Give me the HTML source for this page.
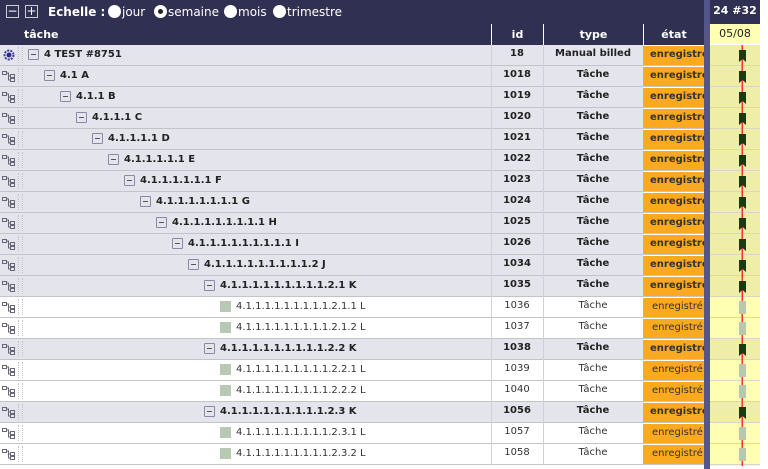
<!DOCTYPE html><html><head><meta charset="utf-8"><style>
body{margin:0;width:768px;height:469px;background:#fff;font-family:"DejaVu Sans","Liberation Sans",sans-serif;font-size:10px;position:relative;overflow:hidden;color:#222}
.a{position:absolute}
.top{left:0;top:0;width:760px;height:24px;background:#2f3052}
.hd{top:24px;height:21px;background:#2f3052;color:#fff;font-weight:bold;font-size:11px;line-height:21px;text-align:center;border-left:1px solid #fff;box-sizing:border-box}
.btn{top:5px;width:13px;height:13px;border:1px solid #ccc;box-sizing:border-box;color:#fff;font-size:12px;line-height:10px;text-align:center}
.rd{top:5px;width:13px;height:13px;border-radius:50%;background:#fff}
.tt{top:5px;color:#fff;font-size:12px;font-weight:bold}
.row{left:0;width:704px;height:20px;border-bottom:1px solid #c4c4c8}
.b{background:#e4e4ec;font-weight:bold}
.n{background:#fff;color:#333}
.c{position:absolute;top:0;height:20px;line-height:18px;text-align:center}
.et{left:643px;width:61px;background:#fba91e;color:#333;border-top:1px solid #fff;box-sizing:border-box;overflow:hidden;white-space:nowrap;text-align:left;padding-left:9px}
.b .et{padding-left:7px}
.mb{position:absolute;top:4px;width:11px;height:11px;border:1px solid #8a8aa8;box-sizing:border-box;background:#e4e4ec;border-radius:1px}
.mb:after{content:"";position:absolute;left:2px;top:4px;width:5px;height:1px;background:#555}
.sq{position:absolute;top:4px;width:11px;height:11px;background:#b7c9b3}
.lb{position:absolute;top:0;line-height:19px;white-space:nowrap}
.ic{position:absolute;left:2px;top:4px;width:14px;height:12px}
.dots{position:absolute;left:18px;top:2px;width:3px;height:16px;border-left:1px dotted #c4c4c4;border-right:1px dotted #c4c4c4}
</style></head><body>
<div class="a top"></div>
<div class="a btn" style="left:6px">−</div><div class="a btn" style="left:25px">+</div>
<div class="a tt" style="left:48px">Echelle :</div>
<div class="a rd" style="left:108px"></div><div class="a tt" style="left:122px;font-weight:normal">jour</div>
<div class="a rd" style="left:154px"></div><div class="a" style="left:158px;top:9px;width:5px;height:5px;border-radius:50%;background:#222"></div><div class="a tt" style="left:168px;font-weight:normal">semaine</div>
<div class="a rd" style="left:224px"></div><div class="a tt" style="left:238px;font-weight:normal">mois</div>
<div class="a rd" style="left:273px"></div><div class="a tt" style="left:287px;font-weight:normal">trimestre</div>
<div class="a hd" style="left:0;width:491px;border:0;text-align:left;padding-left:24px">tâche</div>
<div class="a hd" style="left:491px;width:52px">id</div>
<div class="a hd" style="left:543px;width:100px">type</div>
<div class="a hd" style="left:643px;width:61px">état</div>
<div class="a" style="left:704px;top:0;width:6px;height:469px;background:#54558a"></div>
<div class="a" style="left:710px;top:4px;width:50px;color:#fff;font-weight:bold;font-size:11px;text-align:center">24 #32</div>
<div class="a" style="left:710px;top:24px;width:50px;height:20px;background:#ffffb4;text-align:center;line-height:20px;font-size:11px">05/08</div>

<div class="a row b" style="top:45px"><svg class="ic" viewBox="0 0 14 12"><circle cx="7" cy="6" r="4.5" fill="none" stroke="#3a3a9a" stroke-dasharray="2 1.2" stroke-width="2"/><circle cx="7" cy="6" r="2.5" fill="#2a2a8a"/></svg><div class="dots"></div><div class="mb" style="left:28px"></div><div class="lb" style="left:44px">4 TEST #8751</div><div class="c" style="left:491px;width:52px">18</div><div class="c" style="left:543px;width:100px">Manual billed</div><div class="c et">enregistré</div></div>
<div class="a row b" style="top:66px"><svg class="ic" viewBox="0 0 14 12"><path d="M0.5 1.5h4v3h-4zM8.5 4.5h4v3h-4zM8.5 8.5h4v3h-4zM4.5 3h2v7h2M6.5 6h2" fill="none" stroke="#667" stroke-width="1"/></svg><div class="dots"></div><div class="mb" style="left:44px"></div><div class="lb" style="left:60px">4.1 A</div><div class="c" style="left:491px;width:52px">1018</div><div class="c" style="left:543px;width:100px">Tâche</div><div class="c et">enregistré</div></div>
<div class="a row b" style="top:87px"><svg class="ic" viewBox="0 0 14 12"><path d="M0.5 1.5h4v3h-4zM8.5 4.5h4v3h-4zM8.5 8.5h4v3h-4zM4.5 3h2v7h2M6.5 6h2" fill="none" stroke="#667" stroke-width="1"/></svg><div class="dots"></div><div class="mb" style="left:60px"></div><div class="lb" style="left:76px">4.1.1 B</div><div class="c" style="left:491px;width:52px">1019</div><div class="c" style="left:543px;width:100px">Tâche</div><div class="c et">enregistré</div></div>
<div class="a row b" style="top:108px"><svg class="ic" viewBox="0 0 14 12"><path d="M0.5 1.5h4v3h-4zM8.5 4.5h4v3h-4zM8.5 8.5h4v3h-4zM4.5 3h2v7h2M6.5 6h2" fill="none" stroke="#667" stroke-width="1"/></svg><div class="dots"></div><div class="mb" style="left:76px"></div><div class="lb" style="left:92px">4.1.1.1 C</div><div class="c" style="left:491px;width:52px">1020</div><div class="c" style="left:543px;width:100px">Tâche</div><div class="c et">enregistré</div></div>
<div class="a row b" style="top:129px"><svg class="ic" viewBox="0 0 14 12"><path d="M0.5 1.5h4v3h-4zM8.5 4.5h4v3h-4zM8.5 8.5h4v3h-4zM4.5 3h2v7h2M6.5 6h2" fill="none" stroke="#667" stroke-width="1"/></svg><div class="dots"></div><div class="mb" style="left:92px"></div><div class="lb" style="left:108px">4.1.1.1.1 D</div><div class="c" style="left:491px;width:52px">1021</div><div class="c" style="left:543px;width:100px">Tâche</div><div class="c et">enregistré</div></div>
<div class="a row b" style="top:150px"><svg class="ic" viewBox="0 0 14 12"><path d="M0.5 1.5h4v3h-4zM8.5 4.5h4v3h-4zM8.5 8.5h4v3h-4zM4.5 3h2v7h2M6.5 6h2" fill="none" stroke="#667" stroke-width="1"/></svg><div class="dots"></div><div class="mb" style="left:108px"></div><div class="lb" style="left:124px">4.1.1.1.1.1 E</div><div class="c" style="left:491px;width:52px">1022</div><div class="c" style="left:543px;width:100px">Tâche</div><div class="c et">enregistré</div></div>
<div class="a row b" style="top:171px"><svg class="ic" viewBox="0 0 14 12"><path d="M0.5 1.5h4v3h-4zM8.5 4.5h4v3h-4zM8.5 8.5h4v3h-4zM4.5 3h2v7h2M6.5 6h2" fill="none" stroke="#667" stroke-width="1"/></svg><div class="dots"></div><div class="mb" style="left:124px"></div><div class="lb" style="left:140px">4.1.1.1.1.1.1 F</div><div class="c" style="left:491px;width:52px">1023</div><div class="c" style="left:543px;width:100px">Tâche</div><div class="c et">enregistré</div></div>
<div class="a row b" style="top:192px"><svg class="ic" viewBox="0 0 14 12"><path d="M0.5 1.5h4v3h-4zM8.5 4.5h4v3h-4zM8.5 8.5h4v3h-4zM4.5 3h2v7h2M6.5 6h2" fill="none" stroke="#667" stroke-width="1"/></svg><div class="dots"></div><div class="mb" style="left:140px"></div><div class="lb" style="left:156px">4.1.1.1.1.1.1.1 G</div><div class="c" style="left:491px;width:52px">1024</div><div class="c" style="left:543px;width:100px">Tâche</div><div class="c et">enregistré</div></div>
<div class="a row b" style="top:213px"><svg class="ic" viewBox="0 0 14 12"><path d="M0.5 1.5h4v3h-4zM8.5 4.5h4v3h-4zM8.5 8.5h4v3h-4zM4.5 3h2v7h2M6.5 6h2" fill="none" stroke="#667" stroke-width="1"/></svg><div class="dots"></div><div class="mb" style="left:156px"></div><div class="lb" style="left:172px">4.1.1.1.1.1.1.1.1 H</div><div class="c" style="left:491px;width:52px">1025</div><div class="c" style="left:543px;width:100px">Tâche</div><div class="c et">enregistré</div></div>
<div class="a row b" style="top:234px"><svg class="ic" viewBox="0 0 14 12"><path d="M0.5 1.5h4v3h-4zM8.5 4.5h4v3h-4zM8.5 8.5h4v3h-4zM4.5 3h2v7h2M6.5 6h2" fill="none" stroke="#667" stroke-width="1"/></svg><div class="dots"></div><div class="mb" style="left:172px"></div><div class="lb" style="left:188px">4.1.1.1.1.1.1.1.1.1 I</div><div class="c" style="left:491px;width:52px">1026</div><div class="c" style="left:543px;width:100px">Tâche</div><div class="c et">enregistré</div></div>
<div class="a row b" style="top:255px"><svg class="ic" viewBox="0 0 14 12"><path d="M0.5 1.5h4v3h-4zM8.5 4.5h4v3h-4zM8.5 8.5h4v3h-4zM4.5 3h2v7h2M6.5 6h2" fill="none" stroke="#667" stroke-width="1"/></svg><div class="dots"></div><div class="mb" style="left:188px"></div><div class="lb" style="left:204px">4.1.1.1.1.1.1.1.1.1.2 J</div><div class="c" style="left:491px;width:52px">1034</div><div class="c" style="left:543px;width:100px">Tâche</div><div class="c et">enregistré</div></div>
<div class="a row b" style="top:276px"><svg class="ic" viewBox="0 0 14 12"><path d="M0.5 1.5h4v3h-4zM8.5 4.5h4v3h-4zM8.5 8.5h4v3h-4zM4.5 3h2v7h2M6.5 6h2" fill="none" stroke="#667" stroke-width="1"/></svg><div class="dots"></div><div class="mb" style="left:204px"></div><div class="lb" style="left:220px">4.1.1.1.1.1.1.1.1.1.2.1 K</div><div class="c" style="left:491px;width:52px">1035</div><div class="c" style="left:543px;width:100px">Tâche</div><div class="c et">enregistré</div></div>
<div class="a row n" style="top:297px"><svg class="ic" viewBox="0 0 14 12"><path d="M0.5 1.5h4v3h-4zM8.5 4.5h4v3h-4zM8.5 8.5h4v3h-4zM4.5 3h2v7h2M6.5 6h2" fill="none" stroke="#667" stroke-width="1"/></svg><div class="dots"></div><div class="sq" style="left:220px"></div><div class="lb" style="left:236px">4.1.1.1.1.1.1.1.1.1.2.1.1 L</div><div class="c" style="left:491px;width:52px">1036</div><div class="c" style="left:543px;width:100px">Tâche</div><div class="c et">enregistré</div></div>
<div class="a row n" style="top:318px"><svg class="ic" viewBox="0 0 14 12"><path d="M0.5 1.5h4v3h-4zM8.5 4.5h4v3h-4zM8.5 8.5h4v3h-4zM4.5 3h2v7h2M6.5 6h2" fill="none" stroke="#667" stroke-width="1"/></svg><div class="dots"></div><div class="sq" style="left:220px"></div><div class="lb" style="left:236px">4.1.1.1.1.1.1.1.1.1.2.1.2 L</div><div class="c" style="left:491px;width:52px">1037</div><div class="c" style="left:543px;width:100px">Tâche</div><div class="c et">enregistré</div></div>
<div class="a row b" style="top:339px"><svg class="ic" viewBox="0 0 14 12"><path d="M0.5 1.5h4v3h-4zM8.5 4.5h4v3h-4zM8.5 8.5h4v3h-4zM4.5 3h2v7h2M6.5 6h2" fill="none" stroke="#667" stroke-width="1"/></svg><div class="dots"></div><div class="mb" style="left:204px"></div><div class="lb" style="left:220px">4.1.1.1.1.1.1.1.1.1.2.2 K</div><div class="c" style="left:491px;width:52px">1038</div><div class="c" style="left:543px;width:100px">Tâche</div><div class="c et">enregistré</div></div>
<div class="a row n" style="top:360px"><svg class="ic" viewBox="0 0 14 12"><path d="M0.5 1.5h4v3h-4zM8.5 4.5h4v3h-4zM8.5 8.5h4v3h-4zM4.5 3h2v7h2M6.5 6h2" fill="none" stroke="#667" stroke-width="1"/></svg><div class="dots"></div><div class="sq" style="left:220px"></div><div class="lb" style="left:236px">4.1.1.1.1.1.1.1.1.1.2.2.1 L</div><div class="c" style="left:491px;width:52px">1039</div><div class="c" style="left:543px;width:100px">Tâche</div><div class="c et">enregistré</div></div>
<div class="a row n" style="top:381px"><svg class="ic" viewBox="0 0 14 12"><path d="M0.5 1.5h4v3h-4zM8.5 4.5h4v3h-4zM8.5 8.5h4v3h-4zM4.5 3h2v7h2M6.5 6h2" fill="none" stroke="#667" stroke-width="1"/></svg><div class="dots"></div><div class="sq" style="left:220px"></div><div class="lb" style="left:236px">4.1.1.1.1.1.1.1.1.1.2.2.2 L</div><div class="c" style="left:491px;width:52px">1040</div><div class="c" style="left:543px;width:100px">Tâche</div><div class="c et">enregistré</div></div>
<div class="a row b" style="top:402px"><svg class="ic" viewBox="0 0 14 12"><path d="M0.5 1.5h4v3h-4zM8.5 4.5h4v3h-4zM8.5 8.5h4v3h-4zM4.5 3h2v7h2M6.5 6h2" fill="none" stroke="#667" stroke-width="1"/></svg><div class="dots"></div><div class="mb" style="left:204px"></div><div class="lb" style="left:220px">4.1.1.1.1.1.1.1.1.1.2.3 K</div><div class="c" style="left:491px;width:52px">1056</div><div class="c" style="left:543px;width:100px">Tâche</div><div class="c et">enregistré</div></div>
<div class="a row n" style="top:423px"><svg class="ic" viewBox="0 0 14 12"><path d="M0.5 1.5h4v3h-4zM8.5 4.5h4v3h-4zM8.5 8.5h4v3h-4zM4.5 3h2v7h2M6.5 6h2" fill="none" stroke="#667" stroke-width="1"/></svg><div class="dots"></div><div class="sq" style="left:220px"></div><div class="lb" style="left:236px">4.1.1.1.1.1.1.1.1.1.2.3.1 L</div><div class="c" style="left:491px;width:52px">1057</div><div class="c" style="left:543px;width:100px">Tâche</div><div class="c et">enregistré</div></div>
<div class="a row n" style="top:444px"><svg class="ic" viewBox="0 0 14 12"><path d="M0.5 1.5h4v3h-4zM8.5 4.5h4v3h-4zM8.5 8.5h4v3h-4zM4.5 3h2v7h2M6.5 6h2" fill="none" stroke="#667" stroke-width="1"/></svg><div class="dots"></div><div class="sq" style="left:220px"></div><div class="lb" style="left:236px">4.1.1.1.1.1.1.1.1.1.2.3.2 L</div><div class="c" style="left:491px;width:52px">1058</div><div class="c" style="left:543px;width:100px">Tâche</div><div class="c et">enregistré</div></div>
<div class="a" style="left:491px;top:45px;width:1px;height:420px;background:#d0d0d4"></div>
<div class="a" style="left:543px;top:45px;width:1px;height:420px;background:#d0d0d4"></div>
<svg class="a" style="left:710px;top:45px" width="50" height="421" viewBox="0 0 50 421">
<g fill="#efeea8"><rect y="0" width="50" height="252"/><rect y="294" width="50" height="21"/><rect y="357" width="50" height="21"/></g>
<g fill="#ffffb4"><rect y="252" width="50" height="42"/><rect y="315" width="50" height="42"/><rect y="378" width="50" height="43"/></g>
<g stroke="#d8d8c0"><path d="M0 20.5H50M0 41.5H50M0 62.5H50M0 83.5H50M0 104.5H50M0 125.5H50M0 146.5H50M0 167.5H50M0 188.5H50M0 209.5H50M0 230.5H50M0 251.5H50M0 272.5H50M0 293.5H50M0 314.5H50M0 335.5H50M0 356.5H50M0 377.5H50M0 398.5H50M0 419.5H50"/></g>
<rect x="31.5" y="0" width="1.5" height="421" fill="#ff3030"/>
<g fill="#1a3a10"><path id="m" d="M29 5h7v12l-3.5-3-3.5 3z"/>
<use href="#m" y="21"/><use href="#m" y="42"/><use href="#m" y="63"/><use href="#m" y="84"/><use href="#m" y="105"/><use href="#m" y="126"/><use href="#m" y="147"/><use href="#m" y="168"/><use href="#m" y="189"/><use href="#m" y="210"/><use href="#m" y="231"/><use href="#m" y="294"/><use href="#m" y="357"/></g>
<g fill="#b8c8b0"><rect x="29" y="256" width="7" height="13"/><rect x="29" y="277" width="7" height="13"/><rect x="29" y="319" width="7" height="13"/><rect x="29" y="340" width="7" height="13"/><rect x="29" y="382" width="7" height="13"/><rect x="29" y="403" width="7" height="13"/></g>
</svg>
</body></html>
